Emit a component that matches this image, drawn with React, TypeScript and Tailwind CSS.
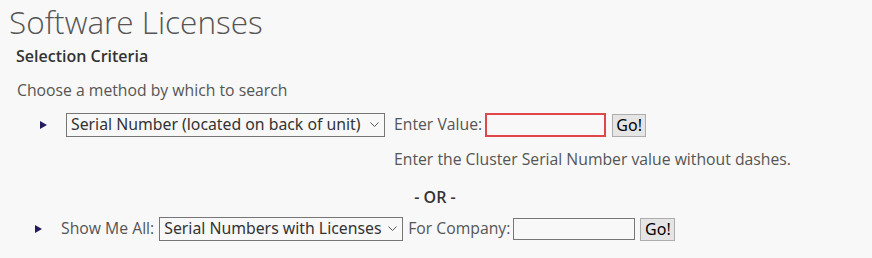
import React from "react";

const Tri = () => (
  <svg width="7" height="8" viewBox="0 0 7 8" className="shrink-0">
    <path d="M0 0 L7 4 L0 8 Z" fill="#221c5c" />
  </svg>
);

const Chevron = () => (
  <svg width="9" height="6" viewBox="0 0 9 6" className="shrink-0">
    <path d="M0.5 0.5 L4.5 4.5 L8.5 0.5" fill="none" stroke="#555" strokeWidth="1" />
  </svg>
);

export default function App() {
  const body = { fontFamily: "'Open Sans', sans-serif" };
  const ctl = { fontFamily: "'Noto Sans', 'Open Sans', sans-serif" };
  return (
    <div className="w-[872px] h-[258px] bg-[#f8f8f8] text-[#555] overflow-hidden" style={body}>
      <h1 className="pl-[9px] pt-[3px] text-[31.5px] leading-[38px] font-light text-[#555]">
        Software Licenses
      </h1>
      <div className="pl-[16px] mt-[5px] text-[16px] leading-[20px] font-semibold text-[#333]">Selection Criteria</div>
      <div className="pl-[17px] mt-[14px] text-[15.75px] leading-[20px]">Choose a method by which to search</div>

      <div className="flex items-center mt-[13px] h-[24px]">
        <div className="w-[66px] pl-[40px] flex items-center">
          <Tri />
        </div>
        <div
          className="w-[319px] h-[24px] border border-[#767676] bg-[#f8f8f8] flex items-center justify-between pl-[4px] pr-[5px] text-[15.8px] text-[#333]"
          style={ctl}
        >
          <span>Serial Number (located on back of unit)</span>
          <Chevron />
        </div>
        <span className="ml-[9px] text-[15.75px]">Enter Value:</span>
        <div className="ml-[3px] w-[121px] h-[24px] border-2 border-[#e0474c] bg-[#f8f8f8]" />
        <button
          className="ml-[6px] w-[34px] h-[23px] border border-[#adadad] bg-[#e5e5e5] text-[16px] text-black flex items-center justify-center"
          style={ctl}
        >
          Go!
        </button>
      </div>

      <div className="pl-[394px] mt-[12px] text-[15.75px] leading-[20px]">Enter the Cluster Serial Number value without dashes.</div>

      <div className="mt-[18px] text-center w-[872px] pr-[2px] text-[16px] leading-[20px] font-semibold text-[#333]">- OR -</div>

      <div className="flex items-center mt-[10px] h-[24px]">
        <div className="w-[61px] pl-[35px] flex items-center">
          <Tri />
        </div>
        <span className="text-[15.75px]">Show Me All:</span>
        <div
          className="ml-[5px] w-[244px] h-[24px] border border-[#767676] bg-[#f8f8f8] flex items-center justify-between pl-[4px] pr-[5px] text-[15.8px] text-[#333]"
          style={ctl}
        >
          <span>Serial Numbers with Licenses</span>
          <Chevron />
        </div>
        <span className="ml-[5px] text-[15.75px]">For Company:</span>
        <div className="ml-[3px] w-[122px] h-[22px] border border-[#767676] bg-[#f8f8f8]" />
        <button
          className="ml-[5px] w-[35px] h-[23px] border border-[#adadad] bg-[#e5e5e5] text-[16px] text-black flex items-center justify-center"
          style={ctl}
        >
          Go!
        </button>
      </div>
    </div>
  );
}
